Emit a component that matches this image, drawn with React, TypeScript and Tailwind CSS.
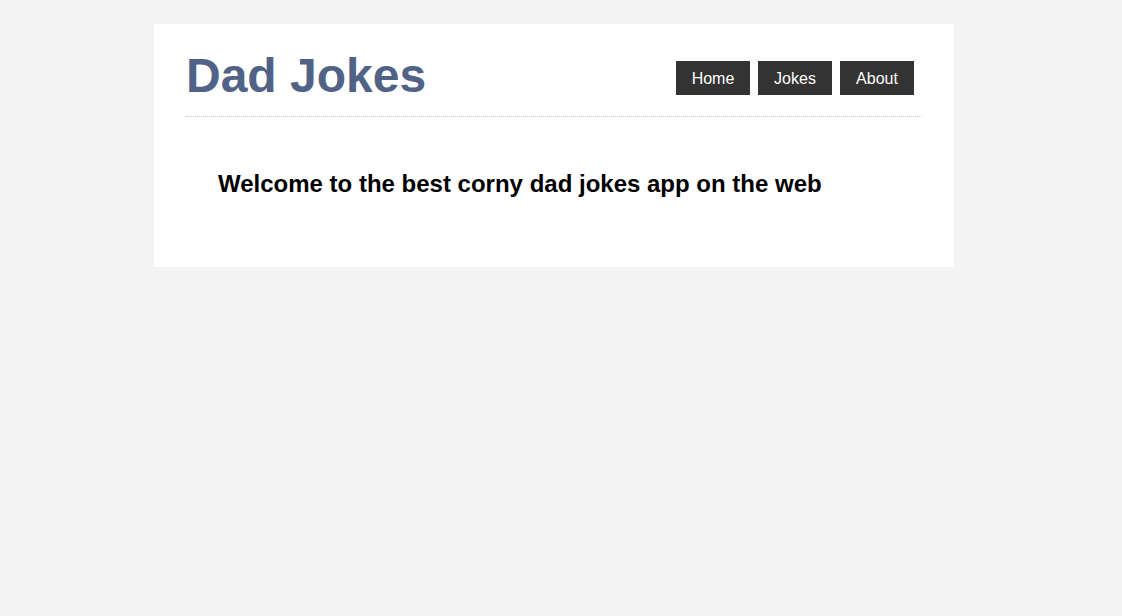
export default function App() {
  return (
    <div className="min-h-[616px] w-full bg-[#f4f4f4] pt-6 pr-[14px]" style={{ fontFamily: '"Liberation Sans", Arial, sans-serif' }}>
      <div className="mx-auto w-[800px] bg-white px-8 pt-6 pb-[69px]">
        <header className="flex items-center justify-between border-b border-dotted border-[#c8c8c8] pb-[13px]">
          <h1 className="text-[48px] font-bold leading-[55px] text-[#506387]">Dad Jokes</h1>
          <nav className="mr-[8px] mt-[5px] flex gap-2">
            {["Home", "Jokes", "About"].map((t) => (
              <a key={t} className="flex h-[34px] w-[74px] items-center justify-center bg-[#333333] pt-[2px] text-[16px] text-white">
                {t}
              </a>
            ))}
          </nav>
        </header>
        <main className="px-8 pt-[53px]">
          <h2 className="text-[24px] font-bold leading-[27.6px] text-black">Welcome to the best corny dad jokes app on the web</h2>
        </main>
      </div>
    </div>
  );
}
